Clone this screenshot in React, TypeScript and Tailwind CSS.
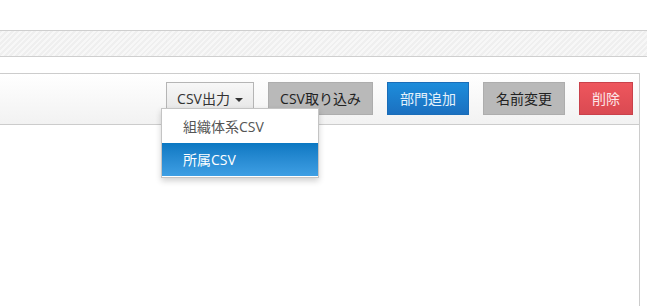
import { useState } from "react";

const menuItems = ["組織体系CSV", "所属CSV"];

export default function App() {
  const [active, setActive] = useState(1);

  return (
    <div className="h-[306px] w-[647px] overflow-hidden bg-white font-['Open_Sans','Noto_Sans_CJK_JP',sans-serif] text-[14px] text-[#333]">
      {/* top spacer + textured band */}
      <div className="h-[30px] bg-white" />
      <div className="h-[27px] border-y border-[#cfcfcf] bg-[repeating-linear-gradient(135deg,#efefef_0px,#efefef_2px,#f7f7f7_2px,#f7f7f7_4px)]" />
      <div className="h-[16px]" />

      {/* panel */}
      <div className="mr-[7px] h-[233px] border-t border-r border-[#cccccc]">
        <div className="flex h-[51px] items-start justify-end gap-[14px] border-b border-[#cccccc] bg-gradient-to-b from-white to-[#f2f2f2] pt-[8px] pr-[6px]">
          <div className="relative">
            <button className="flex h-[33px] w-[88px] items-center justify-center gap-[5px] border border-[#b5b5b5] bg-gradient-to-b from-[#f7f7f7] to-[#e5e5e5] text-[#333]">
              CSV出力
              <span className="mt-[2px] h-0 w-0 border-x-[4px] border-t-[4px] border-x-transparent border-t-[#333]" />
            </button>
            <ul className="absolute top-[26px] left-[-5px] z-10 w-[158px] border border-[#c4c4c4] bg-white py-px shadow-[0_3px_6px_rgba(0,0,0,0.18)]">
              {menuItems.map((label, i) => (
                <li
                  key={label}
                  onMouseEnter={() => setActive(i)}
                  className={
                    i === active
                      ? "flex h-[33px] items-center bg-gradient-to-b from-[#0a78c2] to-[#3e9fe4] pl-[21px] text-white"
                      : "flex h-[33px] items-center pl-[21px] text-[#555]"
                  }
                >
                  {label}
                </li>
              ))}
            </ul>
          </div>
          <button className="h-[33px] w-[105px] border border-[#adadad] bg-[#b9b9b9] text-[#222]">
            CSV取り込み
          </button>
          <button className="h-[33px] w-[82px] border border-[#1a6db8] bg-gradient-to-b from-[#1d8ddb] to-[#1b70c0] text-[#e4f1fb]">
            部門追加
          </button>
          <button className="h-[33px] w-[82px] border border-[#adadad] bg-[#b9b9b9] text-[#222]">
            名前変更
          </button>
          <button className="h-[33px] w-[54px] border border-[#c9414b] bg-gradient-to-b from-[#ee565d] to-[#da4a52] text-[#fde6e8]">
            削除
          </button>
        </div>
        <div className="h-full bg-white" />
      </div>
    </div>
  );
}
